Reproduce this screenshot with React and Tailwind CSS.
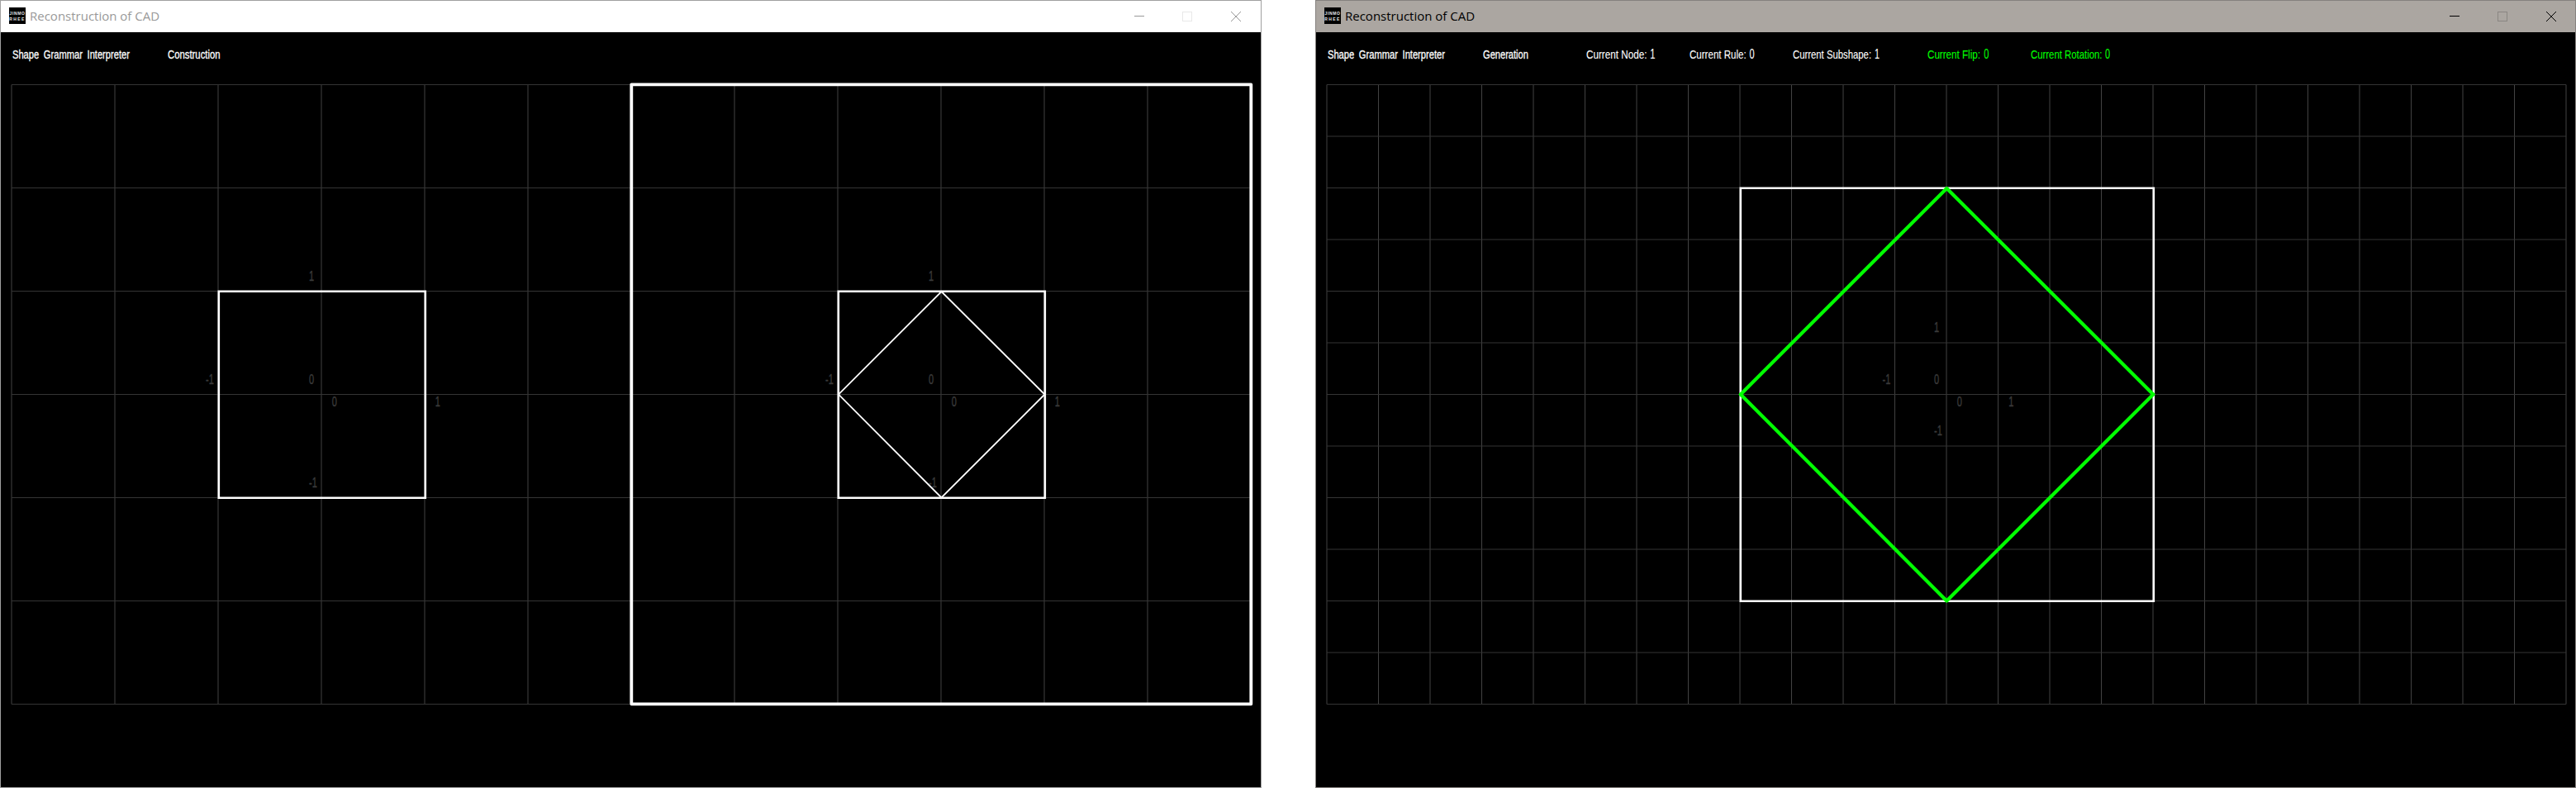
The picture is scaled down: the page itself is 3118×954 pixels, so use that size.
const WHITE = '#ffffff'
const GREEN = '#00ff00'

function Caption({ children, value, x = 1, className = '' }) {
  const weight = value === undefined
    ? '[-webkit-text-stroke:0.3px_currentColor]'
    : '[-webkit-text-stroke:0.1px_currentColor]'
  return (
    <span
      className={`flex origin-left items-baseline whitespace-pre font-['Liberation_Sans'] text-[15px] leading-5 ${weight} ${className}`}
      style={{ transform: `scaleX(${x})` }}
    >
      {children}
      {value !== undefined && (
        <span className="ml-[5px] inline-block origin-left scale-x-[0.84] text-[17px]">{value}</span>
      )}
    </span>
  )
}

function AppIcon() {
  return (
    <div className="flex h-5 w-5 shrink-0 flex-col items-center justify-center gap-px overflow-hidden bg-black font-['Liberation_Sans'] text-[5px] font-bold leading-[6px] tracking-[0.6px] text-gray-200">
      <span>JINMO</span>
      <span className="tracking-[1.4px]">RHEE</span>
    </div>
  )
}

function TitleBar({ active }) {
  return (
    <header
      className={`flex h-[38px] items-center ${active ? 'bg-[#aba6a1] text-black' : 'bg-white text-[#999999]'}`}
    >
      <div className="flex grow items-center pb-[2px] pl-[10px]">
        <AppIcon />
        <span className="ml-[5px] whitespace-nowrap font-['Open_Sans'] text-[15px] leading-5">
          Reconstruction of CAD
        </span>
      </div>
      <svg
        className={active ? 'w-[166px]' : 'w-[167px]'}
        height="38"
        fill="none"
        stroke="currentColor"
        shapeRendering="crispEdges"
      >
        <path d="M14 18.5h12" />
        <rect x="72.5" y="13.5" width="11" height="11" className={active ? 'stroke-[#8a8682]' : 'stroke-[#e8e8e8]'} />
        <path d="M131 13l12 12M143 13l-12 12" shapeRendering="auto" />
      </svg>
    </header>
  )
}

function Grid({ x, cols, rows, step }) {
  const y = 63.5
  const vs = Array.from({ length: cols + 1 }, (_, i) => x + i * step)
  const hs = Array.from({ length: rows + 1 }, (_, i) => y + i * step)
  return (
    <g>
      {vs.map((v) => <path key={`v${v}`} stroke="#424242" d={`M${v} ${y}V${y + rows * step}`} />)}
      {hs.map((h) => <path key={`h${h}`} stroke="#343434" d={`M${x} ${h}H${x + cols * step}`} />)}
    </g>
  )
}

function AxisLabels({ cx, step }) {
  const cy = 438
  const marks = [
    ['1', cx - 15, cy - step - 12.5],
    ['0', cx - 15, cy - 12.5],
    ['-1', cx - 15, cy + step - 12.5],
    ['-1', cx - step - 15, cy - 12.5],
    ['0', cx + 12.7, cy + 15],
    ['1', cx + step + 12.7, cy + 15],
  ]
  return (
    <g
      fill="#3a3a3a"
      stroke="#3a3a3a"
      strokeWidth="0.4"
      fontFamily="Liberation Sans, sans-serif"
      fontSize="17"
    >
      {marks.map(([t, x, y], i) => (
        <text key={i} transform={`translate(${x} ${y}) scale(0.65 1)`}>{t}</text>
      ))}
    </g>
  )
}

function Window({ active, width, status, children }) {
  return (
    <section className={`flex h-[954px] flex-col border ${width} ${active ? 'border-[#85817e]' : 'border-[#a0a0a0]'} bg-black`}>
      <TitleBar active={active} />
      <nav className="flex h-[54px] shrink-0 items-center pl-[14px] text-white">{status}</nav>
      <svg className="-mt-[54px] block h-[914px] w-full" fill="none">{children}</svg>
    </section>
  )
}

export default function App() {
  return (
    <main className="flex h-[954px] w-[3118px] justify-between overflow-hidden bg-white">
      <Window
        width="w-[1527px]"
        status={
          <>
            <div className="w-[188px]"><Caption x={0.742} className="[word-spacing:3.5px]">Shape Grammar Interpreter</Caption></div>
            <Caption x={0.755}>Construction</Caption>
          </>
        }
      >
        <Grid x={13} cols={12} rows={6} step={125} />
        <AxisLabels cx={388} step={125} />
        <AxisLabels cx={1138} step={125} />
        <g stroke={WHITE} strokeWidth="2.6">
          <path d="M263.8 313.8H513.8V563.8H263.8Z" />
          <path d="M1013.8 313.8H1263.8V563.8H1013.8Z" />
          <path d="M1138.5 314L1263.5 438.5L1138.5 563.5L1014 438.5Z" strokeWidth="1.8" />
          <path d="M763.3 63.3H1513.3V813.3H763.3Z" strokeWidth="3.8" strokeLinejoin="round" />
        </g>
      </Window>
      <Window
        active
        width="w-[1526px]"
        status={
          <>
            <div className="w-[188px]"><Caption x={0.742} className="[word-spacing:3.5px]">Shape Grammar Interpreter</Caption></div>
            <div className="w-[125px]"><Caption x={0.74}>Generation</Caption></div>
            <div className="w-[125px]"><Caption x={0.78} value="1">Current Node:</Caption></div>
            <div className="w-[125px]"><Caption x={0.77} value="0">Current Rule:</Caption></div>
            <div className="w-[163px]"><Caption x={0.755} value="1">Current Subshape:</Caption></div>
            <div className="w-[125px]"><Caption x={0.775} value="0" className="text-[#00ff00]">Current Flip:</Caption></div>
            <Caption x={0.757} value="0" className="text-[#00ff00]">Current Rotation:</Caption>
          </>
        }
      >
        <Grid x={13} cols={24} rows={12} step={62.5} />
        <AxisLabels cx={763} step={62.5} />
        <path d="M513.8 188.8H1013.8V688.8H513.8Z" stroke={WHITE} strokeWidth="2.6" />
        <path d="M763.3 189L1013.3 438.5L763.3 688.5L513.8 438.5Z" stroke={GREEN} strokeWidth="4.2" strokeLinejoin="round" />
      </Window>
    </main>
  )
}
